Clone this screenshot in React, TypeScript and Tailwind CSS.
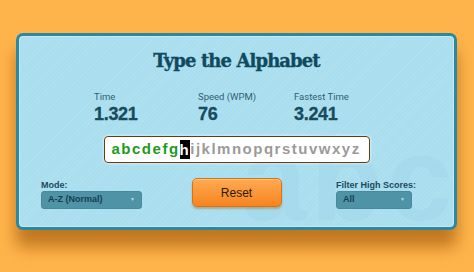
import React from "react";

const letters = "abcdefghijklmnopqrstuvwxyz".split("");

export default function App() {
  return (
    <div className="w-[474px] h-[272px] bg-[#ffb44b] pt-[33px] pl-[16px] overflow-hidden">
      <div className="relative w-[441px] h-[197px] rounded-[7px] border-[3px] border-[#2b88a2] bg-[#a9deef] bg-[repeating-linear-gradient(135deg,rgba(255,255,255,0.09)_0px,rgba(255,255,255,0.09)_1px,transparent_1px,transparent_3px)] shadow-[0_17px_16px_rgba(150,80,5,0.6),inset_0_0_0_1px_rgba(255,255,255,0.35)] overflow-hidden">
        {/* watermark */}
        <div className="absolute left-[222px] top-[84px] text-[118px] leading-[118px] font-bold tracking-[4px] text-[#9fd5e8] opacity-45 select-none [font-family:'Liberation_Sans',sans-serif]">
          abc
        </div>

        <div className="relative flex flex-col">
          <h1 className="pt-[14px] text-center text-[18px] leading-[22px] font-bold tracking-[-0.9px] text-[#0f4a60] [-webkit-text-stroke:0.35px_#0f4a60] [font-family:'DejaVu_Serif',serif]">
            Type the Alphabet
          </h1>

          <div className="flex pl-[75px] mt-[19px]">
            {[
              ["Time", "1.321", "w-[104px]"],
              ["Speed (WPM)", "76", "w-[96px]"],
              ["Fastest Time", "3.241", "w-[100px]"],
            ].map(([label, value, w]) => (
              <div key={label} className={`${w} flex flex-col`}>
                <span className="text-[9.5px] leading-[12px] text-[#2f5f70] [font-family:Roboto,sans-serif]">
                  {label}
                </span>
                <span className="mt-[1px] text-[18px] leading-[20px] font-bold tracking-[-0.3px] text-[#174b5e] [-webkit-text-stroke:0.3px_#174b5e] [font-family:'Liberation_Sans',sans-serif]">
                  {value}
                </span>
              </div>
            ))}
          </div>

          <div className="mt-[12px] mx-auto w-[266px] h-[27px] rounded-[4px] border-[1.5px] border-[#6a3a12] bg-white shadow-[0_0_3px_rgba(255,255,255,0.9)] flex items-center pl-[7px] text-[15px] font-bold [font-family:'Liberation_Sans',sans-serif]">
            {letters.map((l, i) => (
              <span
                key={l}
                className={
                  i < 7
                    ? "text-[#1f9a22] pr-[1.5px]"
                    : i === 7
                    ? "bg-black text-white leading-[19px] pr-[1.5px]"
                    : "text-[#9a9a9a] pr-[1.5px]"
                }
              >
                {l}
              </span>
            ))}
          </div>

          <div className="mt-[15px] grid grid-cols-[1fr_90px_1fr]">
            <div className="pl-[22px] flex flex-col pt-[1px]">
              <span className="text-[9px] leading-[12px] font-bold text-[#1a4b5f] [font-family:'Liberation_Sans',sans-serif]">
                Mode:
              </span>
              <div className="w-[101px] h-[18px] rounded-[3px] bg-[#4f93a7] border border-[#468aa0] flex items-center justify-between pl-[6px] pr-[6px] text-[9px] font-bold text-[#153f52] [font-family:'Liberation_Sans',sans-serif]">
                <span>A-Z (Normal)</span>
                <span className="text-[5px] text-[#b9dbe5]">▼</span>
              </div>
            </div>

            <button className="w-[90px] h-[29px] rounded-[5px] border border-[#e0700e] bg-[linear-gradient(#ffaa52,#f7841f)] shadow-[0_2px_2px_rgba(150,80,0,0.35),inset_0_1px_0_rgba(255,220,170,0.6)] text-[12px] text-[#2a1a08] [font-family:'Liberation_Sans',sans-serif]">
              Reset
            </button>

            <div className="flex justify-end pr-[38px] pt-[1px]">
              <div className="flex flex-col">
                <span className="text-[9px] leading-[12px] font-bold text-[#1a4b5f] whitespace-nowrap [font-family:'Liberation_Sans',sans-serif]">
                  Filter High Scores:
                </span>
                <div className="w-[76px] h-[18px] rounded-[3px] bg-[#4f93a7] border border-[#468aa0] flex items-center justify-between pl-[6px] pr-[6px] text-[9px] font-bold text-[#153f52] [font-family:'Liberation_Sans',sans-serif]">
                  <span>All</span>
                  <span className="text-[5px] text-[#b9dbe5]">▼</span>
                </div>
              </div>
            </div>
          </div>
        </div>
      </div>
    </div>
  );
}
